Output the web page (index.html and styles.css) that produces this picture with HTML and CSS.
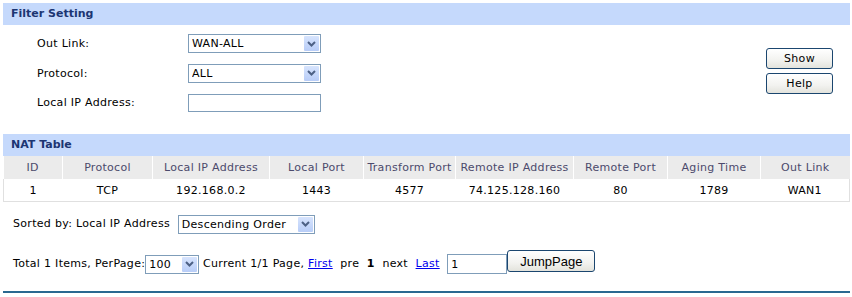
FILE: index.html
```html
<!DOCTYPE html>
<html lang="en">
<head>
<meta charset="UTF-8">
<title>NAT Table</title>
<link rel="stylesheet" href="styles.css">
</head>
<body>

<div class="bar">Filter Setting</div>

<div class="filter">
    <div class="form">
        <label>Out Link:</label>
        <span class="sel sel-wide">
            <select><option>WAN-ALL</option></select>
            <span class="arrow"><svg width="9" height="6" viewBox="0 0 9 6"><path d="M1 1l3.5 3.5L8 1" fill="none" stroke="#4d6185" stroke-width="2"/></svg></span>
        </span>
        <label>Protocol:</label>
        <span class="sel sel-wide">
            <select><option>ALL</option></select>
            <span class="arrow"><svg width="9" height="6" viewBox="0 0 9 6"><path d="M1 1l3.5 3.5L8 1" fill="none" stroke="#4d6185" stroke-width="2"/></svg></span>
        </span>
        <label>Local IP Address:</label>
        <input type="text" class="txt txt-wide">
    </div>
    <div class="actions">
        <button class="btn">Show</button>
        <button class="btn">Help</button>
    </div>
</div>

<div class="bar">NAT Table</div>

<table class="grid">
    <colgroup>
        <col style="width:59px"><col style="width:90px"><col style="width:117px">
        <col style="width:94px"><col style="width:92px"><col style="width:118px">
        <col style="width:94px"><col style="width:93px"><col>
    </colgroup>
    <tr>
        <th>ID</th><th>Protocol</th><th>Local IP Address</th><th>Local Port</th>
        <th>Transform Port</th><th>Remote IP Address</th><th>Remote Port</th>
        <th>Aging Time</th><th>Out Link</th>
    </tr>
    <tr>
        <td>1</td><td>TCP</td><td>192.168.0.2</td><td>1443</td>
        <td>4577</td><td>74.125.128.160</td><td>80</td>
        <td>1789</td><td>WAN1</td>
    </tr>
</table>

<div class="sortrow">
    Sorted by: Local IP Address
    <span class="sel sel-sort">
        <select><option>Descending Order</option></select>
        <span class="arrow"><svg width="9" height="6" viewBox="0 0 9 6"><path d="M1 1l3.5 3.5L8 1" fill="none" stroke="#4d6185" stroke-width="2"/></svg></span>
    </span>
</div>

<div class="pager">
    Total 1 Items, PerPage:<span class="sel sel-page">
        <select><option>100</option></select>
        <span class="arrow"><svg width="9" height="6" viewBox="0 0 9 6"><path d="M1 1l3.5 3.5L8 1" fill="none" stroke="#4d6185" stroke-width="2"/></svg></span>
    </span>
    Current 1/1 Page, <a href="#">First</a>&nbsp; pre &nbsp;<b>1</b>&nbsp; next &nbsp;<a href="#">Last</a>&nbsp;
    <input type="text" class="txt txt-page" value="1"><button class="btn btn-jump">JumpPage</button>
</div>

<div class="bottom-line"></div>

</body>
</html>
```

FILE: styles.css
```css
body {
    margin: 0;
    padding: 3px 2px 0 3px;
    font-family: "DejaVu Sans", Verdana, sans-serif;
    font-size: 11px;
    letter-spacing: 0.3px;
    color: #000;
    background: #fff;
}
.bar {
    height: 22px;
    line-height: 22px;
    background-color: #c5d9fc;
    color: #1c3572;
    font-weight: bold;
    letter-spacing: 0;
    padding-left: 8px;
}
.filter {
    display: flex;
    justify-content: space-between;
    align-items: flex-start;
    height: 109px;
}
.form {
    display: grid;
    grid-template-columns: 151px 133px;
    grid-auto-rows: 19px;
    row-gap: 10.5px;
    align-items: center;
    padding: 9px 0 0 34px;
}
.actions {
    display: flex;
    flex-direction: column;
    gap: 4px;
    padding: 23px 17px 0 0;
}
.btn {
    font-family: "DejaVu Sans", Verdana, sans-serif;
    font-size: 11px;
    letter-spacing: 0.3px;
    width: 67px;
    height: 21px;
    padding: 0;
    border: 1px solid #1b466f;
    border-radius: 3px;
    background: linear-gradient(#ffffff, #f2f2ef 60%, #e3e3dc);
    color: #000;
    cursor: pointer;
}
.sel {
    position: relative;
    display: inline-block;
    vertical-align: middle;
    height: 19px;
    letter-spacing: 0;
}
.sel select {
    -webkit-appearance: none;
    appearance: none;
    box-sizing: border-box;
    width: 100%;
    height: 100%;
    margin: 0;
    padding: 0 0 0 3px;
    border: 1px solid #7f9db9;
    border-radius: 0;
    background: #fff;
    font-family: "DejaVu Sans", Verdana, sans-serif;
    font-size: 11px;
    letter-spacing: 0.3px;
    color: #000;
}
.sel .arrow {
    position: absolute;
    top: 2px;
    right: 2px;
    width: 15px;
    height: 15px;
    display: flex;
    align-items: center;
    justify-content: center;
    background: linear-gradient(#d7e4fd, #b8cdf8);
    border-radius: 1px;
    pointer-events: none;
}
.sel-wide { width: 133px; }
.sel-sort { width: 137px; margin-left: 4px; }
.sel-page { width: 54px; }
.txt {
    box-sizing: border-box;
    height: 19px;
    margin: 0;
    border: 1px solid #7f9db9;
    font-family: "DejaVu Sans", Verdana, sans-serif;
    font-size: 11px;
    padding: 0 3px;
}
.txt-wide { width: 133px; height: 18px; }
.txt-page { width: 60px; height: 20px; vertical-align: middle; }
.btn-jump {
    font-family: "Liberation Sans", Arial, sans-serif;
    font-size: 13px;
    letter-spacing: 0;
    width: 88px;
    height: 22px;
    vertical-align: top;
    margin-top: -4px;
}
.grid {
    width: 847px;
    border-collapse: collapse;
    table-layout: fixed;
}
.grid th {
    height: 23px;
    padding: 0;
    background-color: #ebebeb;
    border-left: 1px solid #fff;
    font-weight: normal;
    color: #4c4a6c;
}
.grid th:first-child { border-left: none; }
.grid td {
    height: 22px;
    padding: 0;
    text-align: center;
    border-bottom: 1px solid #e0e0e0;
}
.grid td:first-child { border-left: 1px solid #e0e0e0; }
.grid td:last-child { border-right: 1px solid #e0e0e0; }
.sortrow {
    padding: 12px 0 0 10px;
    height: 20px;
    line-height: 20px;
}
.pager {
    padding: 20px 0 0 10px;
    height: 20px;
    line-height: 20px;
}
.pager a { color: #0000ee; }
.bottom-line {
    margin-top: 17px;
    height: 2px;
    background-color: #2a6890;
}
```
